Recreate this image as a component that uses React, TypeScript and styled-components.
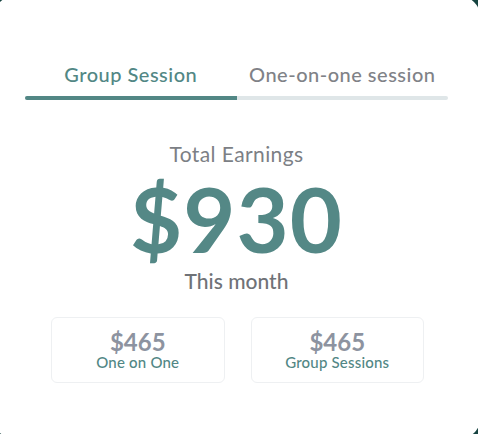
import React, { useState } from "react";
import styled, { createGlobalStyle } from "styled-components";

const GlobalStyle = createGlobalStyle`
  html, body {
    margin: 0;
    padding: 0;
    background: #164441;
    overflow: hidden;
  }
  * { box-sizing: border-box; }
`;

const Card = styled.div`
  margin: -5px 0 0 -7px;
  width: 488px;
  height: 445px;
  background: #ffffff;
  border-radius: 24px;
  padding: 67px 33px 0 32px;
  display: flex;
  flex-direction: column;
  font-family: Lato, "Noto Sans", sans-serif;
`;

const Tabs = styled.div`
  display: grid;
  grid-template-columns: 1fr 1fr;
`;

const Tab = styled.button<{ $active: boolean }>`
  border: none;
  background: none;
  padding: 0 0 10px;
  font-family: inherit;
  font-size: 20px;
  font-weight: 500;
  line-height: 24px;
  letter-spacing: 0.5px;
  color: ${(p) => (p.$active ? "#528785" : "#7f8287")};
  cursor: pointer;
  text-align: center;
`;

const Track = styled.div`
  height: 4px;
  border-radius: 2px;
  background: #dfe6e8;
  overflow: hidden;
`;

const Fill = styled.div`
  height: 100%;
  background: #528785;
  transition: transform 0.2s;
`;

const Summary = styled.div`
  display: flex;
  flex-direction: column;
  align-items: center;
  margin-top: 42px;
`;

const Label = styled.div`
  font-size: 21px;
  line-height: 24px;
  color: #7c7f85;
  letter-spacing: 0.4px;
`;

const Amount = styled.div`
  font-size: 90px;
  line-height: 96px;
  font-weight: 700;
  color: #548886;
  letter-spacing: 1px;
  margin-top: 4px;
`;

const Period = styled.div`
  font-size: 21px;
  line-height: 24px;
  color: #6f7277;
  font-weight: 500;
  margin-top: 3px;
`;

const Boxes = styled.div`
  display: grid;
  grid-template-columns: 1fr 1fr;
  gap: 26px;
  margin: 24px 24px 0 26px;
`;

const Box = styled.div`
  height: 66px;
  border: 1px solid #eef0f2;
  border-radius: 6px;
  display: flex;
  flex-direction: column;
  align-items: center;
  justify-content: center;
  padding-top: 1px;
`;

const BoxValue = styled.div`
  font-size: 24px;
  line-height: 24px;
  font-weight: 700;
  color: #8d93a0;
`;

const BoxLabel = styled.div`
  font-size: 15px;
  line-height: 17px;
  font-weight: 500;
  color: #528785;
  letter-spacing: 0.2px;
`;

export default function App() {
  const [tab, setTab] = useState(0);
  return (
    <>
      <GlobalStyle />
      <Card>
        <Tabs>
          <Tab $active={tab === 0} onClick={() => setTab(0)}>Group Session</Tab>
          <Tab $active={tab === 1} onClick={() => setTab(1)}>One-on-one session</Tab>
        </Tabs>
        <Track>
          <Fill style={{ width: "50%", transform: `translateX(${tab * 100}%)` }} />
        </Track>
        <Summary>
          <Label>Total Earnings</Label>
          <Amount>$930</Amount>
          <Period>This month</Period>
        </Summary>
        <Boxes>
          <Box>
            <BoxValue>$465</BoxValue>
            <BoxLabel>One on One</BoxLabel>
          </Box>
          <Box>
            <BoxValue>$465</BoxValue>
            <BoxLabel>Group Sessions</BoxLabel>
          </Box>
        </Boxes>
      </Card>
    </>
  );
}
